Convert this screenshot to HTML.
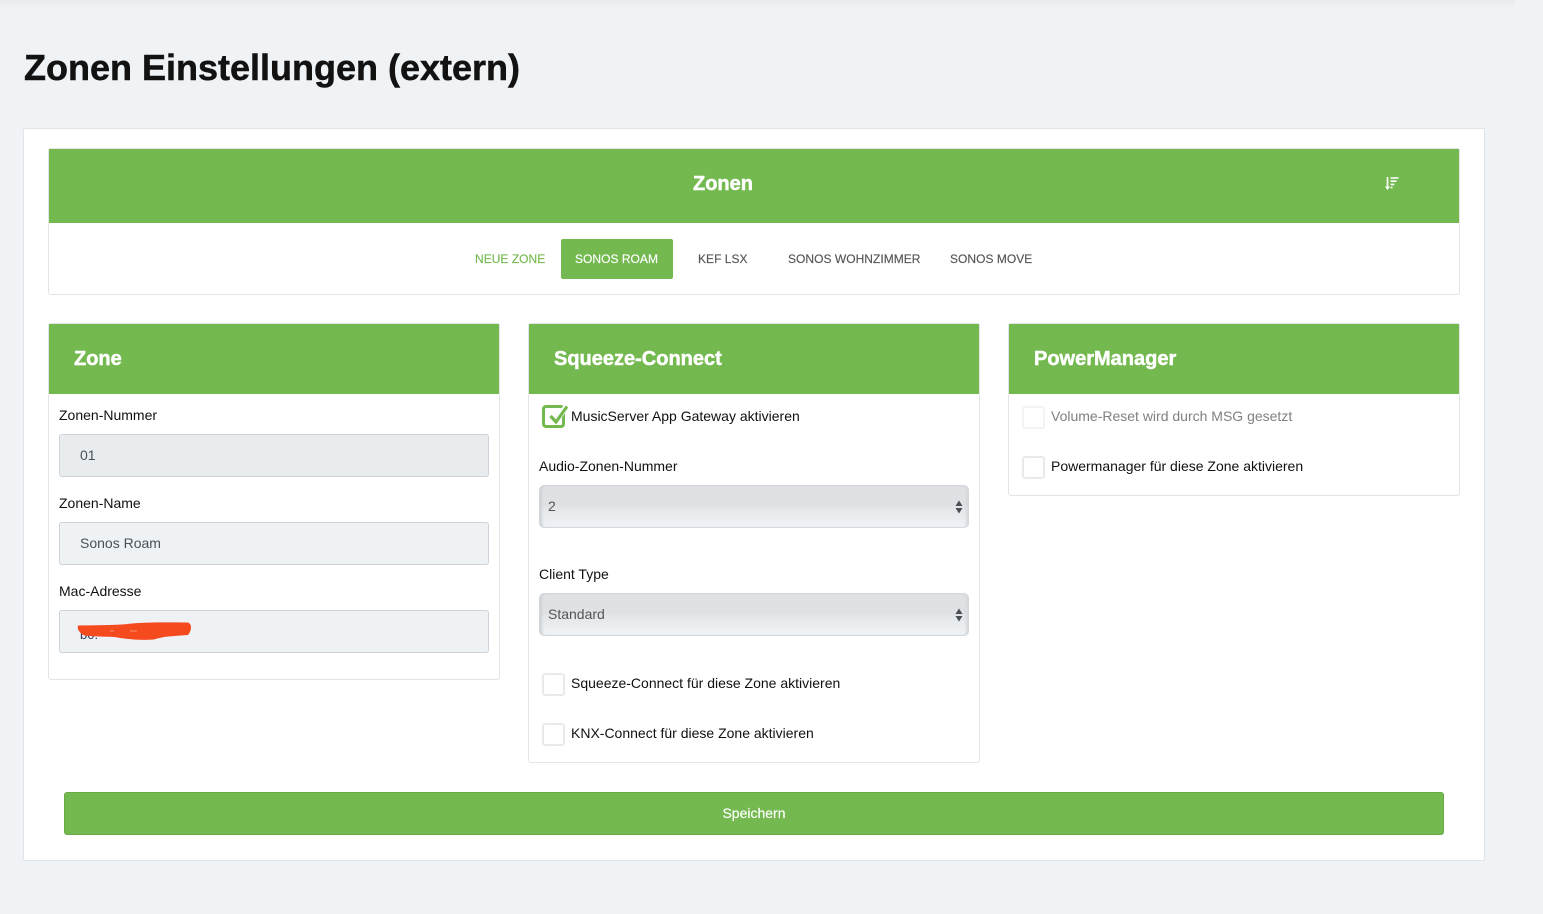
<!DOCTYPE html>
<html lang="de"><head><meta charset="utf-8"><title>Zonen Einstellungen (extern)</title>
<style>
*{box-sizing:border-box}
html,body{margin:0;padding:0;width:1543px;height:914px;overflow:hidden;background:#eff3f6;font-family:"Liberation Sans",sans-serif;color:#111}
.a{position:absolute}
.t{position:absolute;white-space:nowrap;font-size:14px;line-height:18px;color:#111}
.topbar{left:0;top:0;width:1515px;height:9px;background:linear-gradient(#e8ebee,#eef1f4 80%,#eff3f6)}
h1{position:absolute;left:24px;top:46px;margin:0;font-size:36px;line-height:44px;font-weight:700;color:#121212;white-space:nowrap;-webkit-text-stroke:.5px #121212}
.main{left:23px;top:128px;width:1462px;height:733px;background:#fff;border:1px solid #e1e5ea;border-radius:2px}
.panel{background:#fff;border:1px solid #e2e5e8;border-radius:3px}
.head{background:#74b94f;left:49px}
.h{position:absolute;white-space:nowrap;color:#fff;font-weight:700;font-size:20px;line-height:24px;-webkit-text-stroke:.5px #fff}
.nav{position:absolute;white-space:nowrap;font-size:12px;line-height:16px;color:#555;letter-spacing:.03px;-webkit-text-stroke:.15px currentColor}
.input{position:absolute;left:59px;width:430px;height:43px;border:1px solid #ccd3db;border-radius:3px;background:#eff2f5;font-size:14px;line-height:41px;padding-left:20px;color:#495057}
.select{position:absolute;left:539px;width:430px;height:43px;border:1px solid #d3d7dc;border-radius:5px;font-size:14px;line-height:41px;padding-left:8px;color:#555;
background:linear-gradient(#dfe1e4,#dfe1e4 48%,#e3e6e9 52%,#f0f3f6);box-shadow:inset 3px 0 2px -1px #cfd2d6,inset -4px 0 2px -2px #d6d9dc}
.select svg{position:absolute;right:5px;top:14px}
.cb{position:absolute;width:23px;height:23px;background:#fff;border:2px solid #e9eaec;border-radius:3px}
.btn{left:64px;top:792px;width:1380px;height:43px;background:#74b94f;border:1px solid #69a948;border-radius:3px;color:#fff;font-size:14px;line-height:41px;text-align:center;-webkit-text-stroke:.15px #fff}
</style></head><body>
<div class="a topbar"></div>
<h1>Zonen Einstellungen (extern)</h1>
<div class="a main"></div>

<div class="a panel" style="left:48px;top:148px;width:1412px;height:147px"></div>
<div class="a head" style="top:149px;width:1410px;height:74px"></div>
<div class="h" style="left:693px;top:172px">Zonen</div>
<svg class="a" style="left:1384px;top:176px" width="16" height="15" viewBox="0 0 16 15"><path d="M3.500 1v11" stroke="#fff" stroke-width="1.600" fill="none"/><path d="M1 10.500h5L3.500 14z" fill="#fff"/><path d="M6.500 2h8M6.500 5.200h6M6.500 8.400h3.800M6.500 11.600h2" stroke="#fff" stroke-width="1.600" fill="none"/></svg>
<div class="nav" style="left:475px;top:251px;color:#74b94f">NEUE ZONE</div>
<div class="a" style="left:561px;top:239px;width:112px;height:40px;background:#74b94f;border-radius:2px"></div>
<div class="nav" style="left:575px;top:251px;color:#fff">SONOS ROAM</div>
<div class="nav" style="left:698px;top:251px">KEF LSX</div>
<div class="nav" style="left:788px;top:251px">SONOS WOHNZIMMER</div>
<div class="nav" style="left:950px;top:251px">SONOS MOVE</div>

<div class="a panel" style="left:48px;top:323px;width:452px;height:357px"></div>
<div class="a head" style="top:324px;width:450px;height:70px"></div>
<div class="h" style="left:74px;top:347px">Zone</div>
<div class="t" style="left:59px;top:406px">Zonen-Nummer</div>
<div class="input" style="top:434px;background:#e9ecef">01</div>
<div class="t" style="left:59px;top:494px">Zonen-Name</div>
<div class="input" style="top:522px">Sonos Roam</div>
<div class="t" style="left:59px;top:582px">Mac-Adresse</div>
<div class="input" style="top:610px"></div>
<div class="t" style="left:80px;top:626px;font-size:13px;color:#34405a">b0:</div>
<svg class="a" style="left:76px;top:620px" width="116" height="21" viewBox="0 0 116 21"><path d="M2 5.500C20 5 40 5.500 56 3.500C75 2 95 2.500 112 2.500C116 4 116 10 112 15C100 16 88 16 78 19.500C62 20.500 50 19 38 17C24 16.500 12 16.500 7 15C3 12 1 9 2 5.500z" fill="#f5491e"/><path d="M34 11h4M54 11h7" stroke="#f9a68c" stroke-width=".8"/></svg>

<div class="a panel" style="left:528px;top:323px;width:452px;height:440px"></div>
<div class="a" style="left:529px;top:324px;width:450px;height:70px;background:#74b94f"></div>
<div class="h" style="left:554px;top:347px">Squeeze-Connect</div>
<svg class="a" style="left:541px;top:403px" width="28" height="27" viewBox="0 0 28 27"><rect x="2.500" y="3.500" width="20" height="20" rx="2.500" fill="none" stroke="#74b94f" stroke-width="3"/><path d="M17 14.500L26 3" fill="none" stroke="#fff" stroke-width="6"/><path d="M9.500 13l5.500 6L26 3.500" fill="none" stroke="#74b94f" stroke-width="3.200"/></svg>
<div class="t" style="left:571px;top:407px">MusicServer App Gateway aktivieren</div>
<div class="t" style="left:539px;top:457px">Audio-Zonen-Nummer</div>
<div class="select" style="top:485px">2<svg width="8" height="14" viewBox="0 0 8 14"><path d="M4 .5l3.500 5.500H.5zM4 13.500L.5 8h7z" fill="#4a4f55"/></svg></div>
<div class="t" style="left:539px;top:565px">Client Type</div>
<div class="select" style="top:593px">Standard<svg width="8" height="14" viewBox="0 0 8 14"><path d="M4 .5l3.500 5.500H.5zM4 13.500L.5 8h7z" fill="#4a4f55"/></svg></div>
<div class="cb" style="left:542px;top:673px"></div>
<div class="t" style="left:571px;top:674px">Squeeze-Connect für diese Zone aktivieren</div>
<div class="cb" style="left:542px;top:723px"></div>
<div class="t" style="left:571px;top:724px">KNX-Connect für diese Zone aktivieren</div>

<div class="a panel" style="left:1008px;top:323px;width:452px;height:173px"></div>
<div class="a" style="left:1009px;top:324px;width:450px;height:70px;background:#74b94f"></div>
<div class="h" style="left:1034px;top:347px">PowerManager</div>
<div class="cb" style="left:1022px;top:406px;border-color:#f2f3f4"></div>
<div class="t" style="left:1051px;top:407px;color:#808080">Volume-Reset wird durch MSG gesetzt</div>
<div class="cb" style="left:1022px;top:456px"></div>
<div class="t" style="left:1051px;top:457px">Powermanager für diese Zone aktivieren</div>

<div class="a btn">Speichern</div>
</body></html>
